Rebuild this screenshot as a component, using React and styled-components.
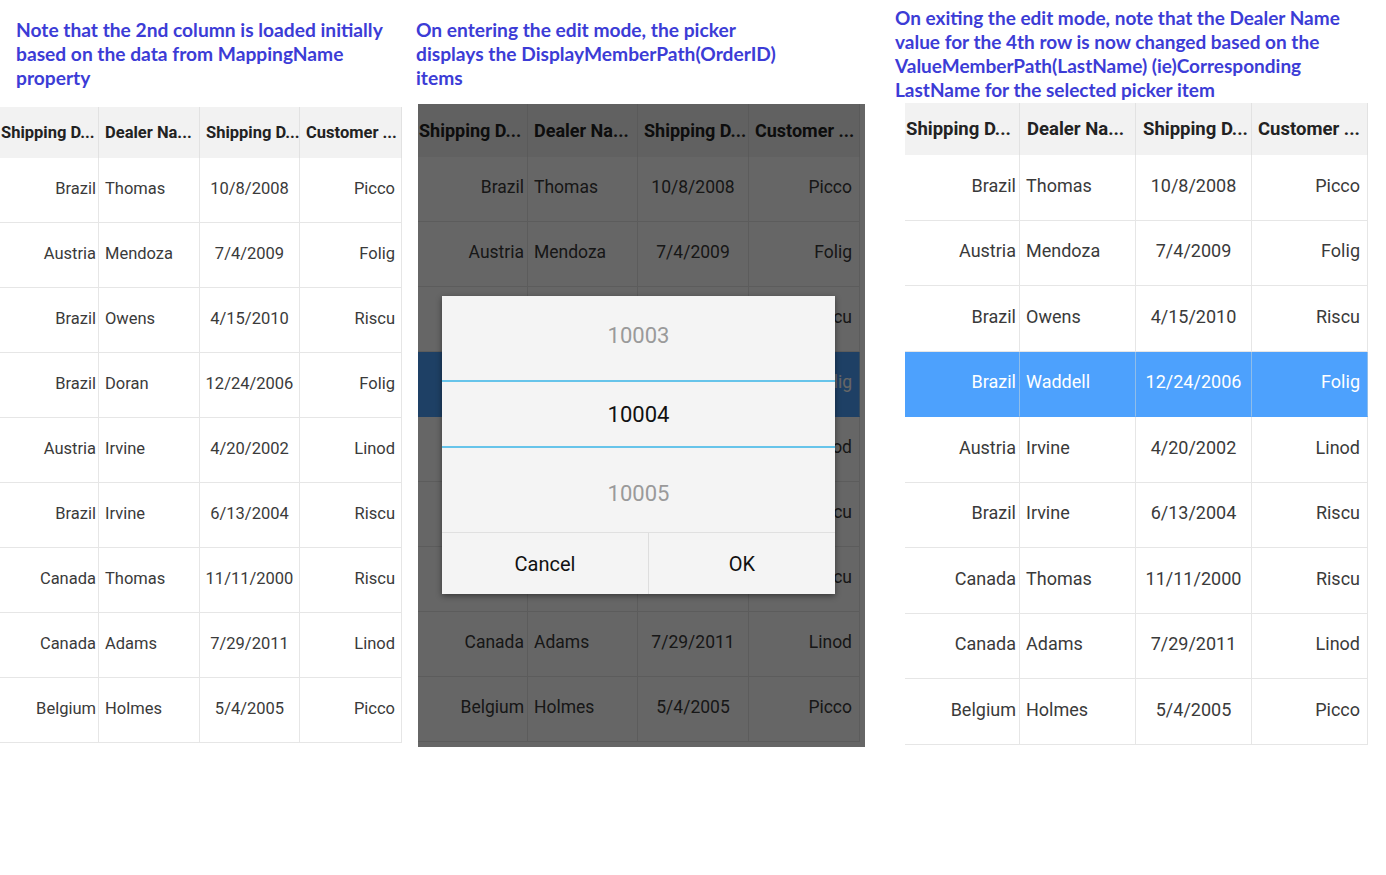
import React from "react";
import styled, { createGlobalStyle } from "styled-components";

const Global = createGlobalStyle`
  html, body { margin: 0; padding: 0; background: #fff; }
  body { font-family: Roboto, "Noto Sans", sans-serif; }
`;

const baseRows = [
  ["Brazil", "Thomas", "10/8/2008", "Picco"],
  ["Austria", "Mendoza", "7/4/2009", "Folig"],
  ["Brazil", "Owens", "4/15/2010", "Riscu"],
  ["Brazil", "Doran", "12/24/2006", "Folig"],
  ["Austria", "Irvine", "4/20/2002", "Linod"],
  ["Brazil", "Irvine", "6/13/2004", "Riscu"],
  ["Canada", "Thomas", "11/11/2000", "Riscu"],
  ["Canada", "Adams", "7/29/2011", "Linod"],
  ["Belgium", "Holmes", "5/4/2005", "Picco"],
];
const editedRows = baseRows.map((r, i) => (i === 3 ? ["Brazil", "Waddell", "12/24/2006", "Folig"] : r));
const headers = ["Shipping D...", "Dealer Na...", "Shipping D...", "Customer ..."];
const aligns = ["right", "left", "center", "right"];

const Page = styled.div`
  display: flex;
  align-items: flex-start;
  width: 1386px;
  height: 875px;
`;

const Panel = styled.section`
  display: flex;
  flex-direction: column;
  width: ${(p) => p.$w}px;
  margin-left: ${(p) => p.$ml}px;
  flex: none;
`;

const Caption = styled.p`
  margin: ${(p) => p.$top}px 0 ${(p) => p.$bottom}px ${(p) => p.$indent}px;
  font-family: Lato, "Open Sans", sans-serif;
  font-weight: 700;
  font-size: ${(p) => p.$size}px;
  line-height: 24px;
  color: #3c3cd6;
  white-space: nowrap;
`;

const GridBox = styled.div`
  display: grid;
  grid-template-columns: ${(p) => p.$cols};
  grid-template-rows: ${(p) => p.$head}px repeat(9, ${(p) => p.$row}px);
  margin-left: ${(p) => p.$ml || 0}px;
  width: max-content;
  background: #fff;
`;

const HeadCell = styled.div`
  display: flex;
  align-items: center;
  background: #f2f2f2;
  padding-left: ${(p) => p.$pl}px;
  font-family: Roboto, sans-serif;
  font-weight: 700;
  font-size: ${(p) => p.$fs}px;
  color: #222;
  white-space: nowrap;
  overflow: hidden;
  border-right: 1px solid #e2e2e2;
  box-sizing: border-box;
`;

const Cell = styled.div`
  display: flex;
  align-items: center;
  justify-content: ${(p) => (p.$align === "right" ? "flex-end" : p.$align === "center" ? "center" : "flex-start")};
  padding: 0 ${(p) => (p.$align === "right" ? p.$pr : 0)}px 0 ${(p) => (p.$align === "left" ? p.$pl : 0)}px;
  padding-bottom: 4px;
  font-family: Roboto, sans-serif;
  font-size: ${(p) => p.$fs}px;
  color: ${(p) => (p.$sel ? "#fff" : "#3a3a3a")};
  background: ${(p) => (p.$sel ? "#4da1fd" : "#fff")};
  border-bottom: 1px solid ${(p) => (p.$sel ? "#4da1fd" : "#e6e6e6")};
  border-right: 1px solid ${(p) => (p.$sel ? "#8fbde9" : "#e6e6e6")};
  box-sizing: border-box;
  white-space: nowrap;
  overflow: hidden;
`;

function DataGrid({ rows, cols, head, row, fs, hfs, headPads, ml, selected, pl, pr, pr0 }) {
  return (
    <GridBox $cols={cols} $head={head} $row={row} $ml={ml}>
      {headers.map((h, i) => (
        <HeadCell key={i} $pl={headPads[i]} $fs={hfs}>
          {h}
        </HeadCell>
      ))}
      {rows.map((r, ri) =>
        r.map((c, ci) => (
          <Cell key={ri + "-" + ci} $align={aligns[ci]} $fs={fs} $sel={ri === selected} $pl={pl} $pr={ci === 0 ? pr0 : pr}>
            {c}
          </Cell>
        ))
      )}
    </GridBox>
  );
}

const Dimmed = styled.div`
  position: relative;
  width: 447px;
  height: 643px;
  margin-left: 2px;
  background: #fff;
`;

const Overlay = styled.div`
  position: absolute;
  inset: 0;
  background: rgba(0, 0, 0, 0.6);
`;

const Dialog = styled.div`
  position: absolute;
  left: 24px;
  top: 192px;
  width: 393px;
  display: flex;
  flex-direction: column;
  background: #f4f4f4;
  box-shadow: 0 2px 6px rgba(0, 0, 0, 0.45);
  font-family: Roboto, sans-serif;
`;

const PickerItem = styled.div`
  display: flex;
  align-items: center;
  justify-content: center;
  height: ${(p) => p.$h}px;
  box-sizing: border-box;
  padding-top: ${(p) => p.$pt || 0}px;
  padding-bottom: ${(p) => p.$pb || 0}px;
  font-size: 22px;
  color: ${(p) => (p.$active ? "#111" : "#9a9a9a")};
  border-top: ${(p) => (p.$lined ? "2px solid #67c4ea" : "none")};
  border-bottom: ${(p) => (p.$lined ? "2px solid #67c4ea" : "none")};
`;

const ButtonRow = styled.div`
  display: grid;
  grid-template-columns: 206px 1fr;
  height: 62px;
  box-sizing: border-box;
  border-top: 1px solid #e0e0e0;
`;

const DialogButton = styled.div`
  display: flex;
  align-items: center;
  justify-content: center;
  font-size: 20px;
  color: #111;
  border-left: ${(p) => (p.$divider ? "1px solid #dedede" : "none")};
`;

export default function App() {
  return (
    <>
      <Global />
      <Page>
        <Panel $w={402} $ml={0}>
          <Caption $top={18} $bottom={17} $indent={16} $size={19.2}>
            Note that the 2nd column is loaded initially
            <br />
            based on the data from MappingName
            <br />
            property
          </Caption>
          <DataGrid
            rows={baseRows}
            cols="99px 101px 100px 102px"
            head={51}
            row={65}
            fs={16.5}
            hfs={16.5}
            headPads={[1, 6, 6, 6]}
            pl={6}
            pr={6}
            pr0={2}
            selected={-1}
          />
        </Panel>
        <Panel $w={449} $ml={14}>
          <Caption $top={18} $bottom={14} $indent={0} $size={19.2}>
            On entering the edit mode, the picker
            <br />
            displays the DisplayMemberPath(OrderID)
            <br />
            items
          </Caption>
          <Dimmed>
            <DataGrid
              rows={baseRows}
              cols="110px 110px 111px 111px"
              head={53}
              row={65}
              fs={17.5}
              hfs={18}
              headPads={[1, 6, 6, 6]}
              pl={6}
              pr={7}
              pr0={3}
              selected={3}
            />
            <Overlay />
            <Dialog>
              <PickerItem $h={84} $pb={6}>10003</PickerItem>
              <PickerItem $h={68} $active $lined>10004</PickerItem>
              <PickerItem $h={84} $pt={6}>10005</PickerItem>
              <ButtonRow>
                <DialogButton>Cancel</DialogButton>
                <DialogButton $divider>OK</DialogButton>
              </ButtonRow>
            </Dialog>
          </Dimmed>
        </Panel>
        <Panel $w={473} $ml={30}>
          <Caption $top={6} $bottom={1} $indent={0} $size={19}>
            On exiting the edit mode, note that the Dealer Name
            <br />
            value for the 4th row is now changed based on the
            <br />
            ValueMemberPath(LastName) (ie)Corresponding
            <br />
            LastName for the selected picker item
          </Caption>
          <DataGrid
            rows={editedRows}
            cols="115px 116px 116px 116px"
            head={52}
            row={65.5}
            fs={18}
            hfs={18.5}
            headPads={[1, 7, 7, 6]}
            pl={6}
            pr={7}
            pr0={3}
            ml={10}
            selected={3}
          />
        </Panel>
      </Page>
    </>
  );
}
